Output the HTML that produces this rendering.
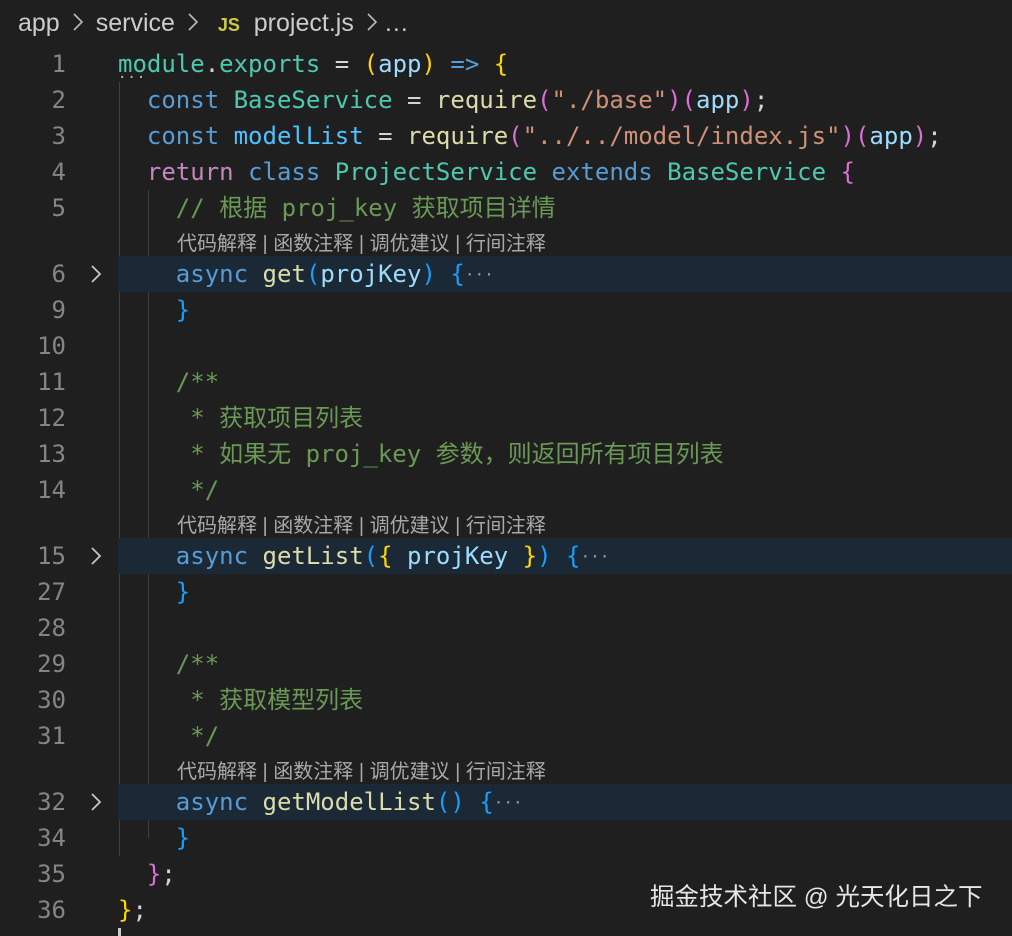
<!DOCTYPE html>
<html><head><meta charset="utf-8"><style>
html,body{margin:0;padding:0;width:1012px;height:936px;overflow:hidden;background:#1f1f1f;}
.bc{position:absolute;top:9px;left:18px;font:25px "Liberation Sans","Noto Sans CJK SC",sans-serif;color:#cccccc;white-space:pre;}
.bc svg{vertical-align:-2px;margin:0 12px 0 12px}
.r{position:absolute;left:0;width:1012px;height:36px;line-height:36px;font:24px/36px "DejaVu Sans Mono",monospace;white-space:pre;color:#d4d4d4;}
.n{position:absolute;left:0;width:66px;text-align:right;color:#858585;}
.c{position:absolute;left:118px;}
.hlb{position:absolute;left:118px;right:0;top:0;bottom:0;background:#1b2936;}
.lens{position:absolute;left:177px;font:20px "Liberation Sans","Noto Sans CJK SC",sans-serif;color:#a8a8a8;white-space:pre;}
.chev{position:absolute;left:89px;top:8px;}
.g{position:absolute;width:1px;background:#404040;}
.k{color:#569cd6}.t{color:#4ec9b0}.v{color:#9cdcfe}.cv{color:#4fc1ff}.f{color:#dcdcaa}.s{color:#ce9178}.p{color:#c586c0}.cm{color:#6a9955}
.y{color:#ffd700}.pu{color:#da70d6}.b{color:#179fff}
.wm{position:absolute;left:650px;top:878px;font:24.5px "Liberation Sans","Noto Sans CJK SC",sans-serif;color:#e6e6e6;}
.cjk{font-family:"DejaVu Sans Mono","Noto Sans CJK SC",monospace;}
.el{color:#999;font-size:16px;vertical-align:2px}
</style></head><body>
<div class="bc">app<svg width="12" height="22" viewBox="0 0 12 22"><path d="M2 3l8 8-8 8" fill="none" stroke="#bbb" stroke-width="1.6"/></svg>service<svg width="12" height="22" viewBox="0 0 12 22"><path d="M2 3l8 8-8 8" fill="none" stroke="#bbb" stroke-width="1.6"/></svg> <span style="color:#cbcb41;font-weight:bold;font-size:18px">JS</span>  project.js<svg width="12" height="22" viewBox="0 0 12 22" style="margin-right:6px"><path d="M2 3l8 8-8 8" fill="none" stroke="#bbb" stroke-width="1.6"/></svg>…</div>

<div class="g" style="left:119px;top:82px;height:774px"></div>
<div class="g" style="left:148px;top:190px;height:648px"></div>

<div class="r" style="top:46px"><span class="n">1</span><span class="c"><span class="t">module</span>.<span class="t">exports</span> = <span class="y">(</span><span class="v">app</span><span class="y">)</span> <span class="k">=&gt;</span> <span class="y">{</span></span></div>
<div style="position:absolute;left:118px;top:70px;color:#bbb;font:14px monospace;letter-spacing:1px">···</div>
<div class="r" style="top:82px"><span class="n">2</span><span class="c">  <span class="k">const</span> <span class="t">BaseService</span> = <span class="f">require</span><span class="pu">(</span><span class="s">"./base"</span><span class="pu">)(</span><span class="v">app</span><span class="pu">)</span>;</span></div>
<div class="r" style="top:118px"><span class="n">3</span><span class="c">  <span class="k">const</span> <span class="cv">modelList</span> = <span class="f">require</span><span class="pu">(</span><span class="s">"../../model/index.js"</span><span class="pu">)(</span><span class="v">app</span><span class="pu">)</span>;</span></div>
<div class="r" style="top:154px"><span class="n">4</span><span class="c">  <span class="p">return</span> <span class="k">class</span> <span class="t">ProjectService</span> <span class="k">extends</span> <span class="t">BaseService</span> <span class="pu">{</span></span></div>
<div class="r cjk" style="top:190px"><span class="n">5</span><span class="c cm">    // 根据 proj_key 获取项目详情</span></div>
<div class="lens" style="top:227px">代码解释 | 函数注释 | 调优建议 | 行间注释</div>
<div class="r" style="top:256px"><div class="hlb"></div><span class="n">6</span><svg class="chev" width="14" height="20" viewBox="0 0 14 20"><path d="M3 2l8 8-8 8" fill="none" stroke="#c5c5c5" stroke-width="1.8"/></svg><span class="c">    <span class="k">async</span> <span class="f">get</span><span class="b">(</span><span class="v">projKey</span><span class="b">)</span> <span class="b">{</span><span class="el">···</span></span></div>
<div class="r" style="top:292px"><span class="n">9</span><span class="c">    <span class="b">}</span></span></div>
<div class="r" style="top:328px"><span class="n">10</span></div>
<div class="r" style="top:364px"><span class="n">11</span><span class="c cm">    /**</span></div>
<div class="r cjk" style="top:400px"><span class="n">12</span><span class="c cm">     * 获取项目列表</span></div>
<div class="r cjk" style="top:436px"><span class="n">13</span><span class="c cm">     * 如果无 proj_key 参数，则返回所有项目列表</span></div>
<div class="r" style="top:472px"><span class="n">14</span><span class="c cm">     */</span></div>
<div class="lens" style="top:509px">代码解释 | 函数注释 | 调优建议 | 行间注释</div>
<div class="r" style="top:538px"><div class="hlb"></div><span class="n">15</span><svg class="chev" width="14" height="20" viewBox="0 0 14 20"><path d="M3 2l8 8-8 8" fill="none" stroke="#c5c5c5" stroke-width="1.8"/></svg><span class="c">    <span class="k">async</span> <span class="f">getList</span><span class="b">(</span><span class="y">{</span> <span class="v">projKey</span> <span class="y">}</span><span class="b">)</span> <span class="b">{</span><span class="el">···</span></span></div>
<div class="r" style="top:574px"><span class="n">27</span><span class="c">    <span class="b">}</span></span></div>
<div class="r" style="top:610px"><span class="n">28</span></div>
<div class="r" style="top:646px"><span class="n">29</span><span class="c cm">    /**</span></div>
<div class="r cjk" style="top:682px"><span class="n">30</span><span class="c cm">     * 获取模型列表</span></div>
<div class="r" style="top:718px"><span class="n">31</span><span class="c cm">     */</span></div>
<div class="lens" style="top:755px">代码解释 | 函数注释 | 调优建议 | 行间注释</div>
<div class="r" style="top:784px"><div class="hlb"></div><span class="n">32</span><svg class="chev" width="14" height="20" viewBox="0 0 14 20"><path d="M3 2l8 8-8 8" fill="none" stroke="#c5c5c5" stroke-width="1.8"/></svg><span class="c">    <span class="k">async</span> <span class="f">getModelList</span><span class="b">()</span> <span class="b">{</span><span class="el">···</span></span></div>
<div class="r" style="top:820px"><span class="n">34</span><span class="c">    <span class="b">}</span></span></div>
<div class="r" style="top:856px"><span class="n">35</span><span class="c">  <span class="pu">}</span>;</span></div>
<div class="r" style="top:892px"><span class="n">36</span><span class="c"><span class="y">}</span>;</span></div>
<div style="position:absolute;left:118px;top:928px;width:3px;height:8px;background:#ccc"></div>

<div class="wm">掘金技术社区 @ 光天化日之下</div>
</body></html>
